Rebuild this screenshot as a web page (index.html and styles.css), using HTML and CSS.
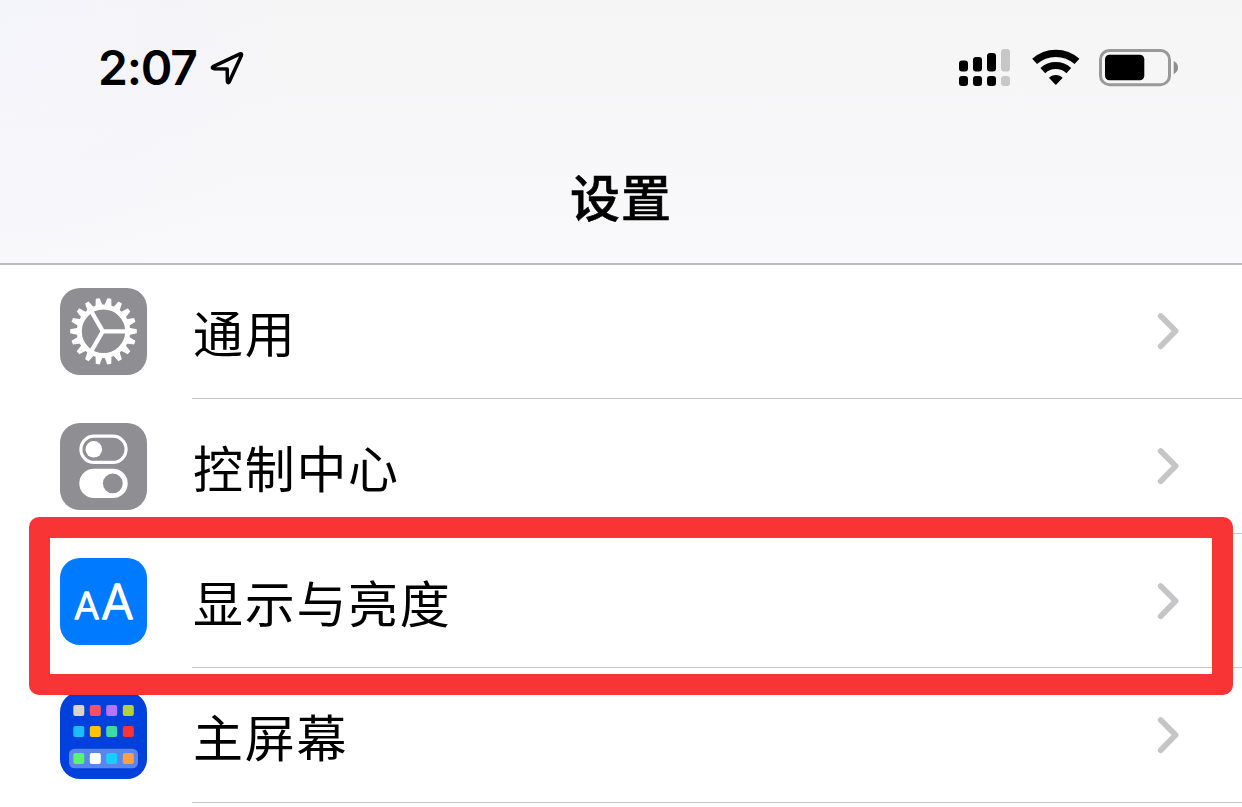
FILE: index.html
```html
<!DOCTYPE html>
<html lang="zh-CN">
<head>
    <meta charset="UTF-8">
    <meta name="viewport" content="width=device-width, initial-scale=1.0">
    <title>设置</title>
    <link rel="stylesheet" href="styles.css">
</head>
<body>
    <header class="header">
        <div class="status-bar">
            <div class="clock">
                <span class="time">2:07</span>
                <svg class="location" width="36" height="36" viewBox="0 0 36 36">
                    <path d="M4 16.6 L31 3.9 Q33.2 3.2 32.4 5.5 L20.3 31.8 Q19 33.8 18.4 31.6 L18.2 19 L4.8 18.7 Q2.2 17.8 4 16.6 Z" fill="none" stroke="#000" stroke-width="3.5" stroke-linejoin="round"/>
                </svg>
            </div>
            <div class="indicators">
                <svg class="signal" width="51" height="38" viewBox="0 0 51 38">
                    <rect x="0" y="11.5" width="9" height="11" rx="3"/>
                    <rect x="14" y="8" width="9" height="14.5" rx="3"/>
                    <rect x="28" y="4" width="9" height="18.5" rx="3"/>
                    <rect x="42" y="0" width="9" height="22.5" rx="3" fill="#c7c7c8"/>
                    <rect x="0" y="27" width="9" height="10" rx="3"/>
                    <rect x="14" y="27" width="9" height="10" rx="3"/>
                    <rect x="28" y="27" width="9" height="10" rx="3"/>
                    <rect x="42" y="27" width="9" height="10" rx="3" fill="#c7c7c8"/>
                </svg>
                <svg class="wifi" width="48" height="38" viewBox="0 0 48 38">
                    <path d="M2.6 12.4 A31.8 31.8 0 0 1 45 12.4" fill="none" stroke="#000" stroke-width="7.2"/>
                    <path d="M10.8 21.6 A19.2 19.2 0 0 1 36.8 21.6" fill="none" stroke="#000" stroke-width="7"/>
                    <path d="M17.9 28.7 A9.5 9.5 0 0 1 29.7 28.7 L23.8 34.9 Z" stroke="#000" stroke-width="1.4" stroke-linejoin="round"/>
                </svg>
                <svg class="battery" width="80" height="38" viewBox="0 0 80 38">
                    <rect x="1.5" y="1.5" width="69" height="34.2" rx="9" fill="none" stroke="#999" stroke-width="3"/>
                    <rect x="6" y="5.8" width="39.3" height="25.4" rx="4.5"/>
                    <path d="M74.7 12 Q79 14.2 79 18.6 Q79 23 74.7 25.2 Z" fill="#8e8e8e"/>
                </svg>
            </div>
        </div>
        <h1 class="title">设置</h1>
    </header>

    <main class="list">
        <div class="row">
            <svg class="icon" width="87" height="87" viewBox="0 0 87 87">
                <defs>
                    <path id="teeth" d="M69 39.7 L76.8 41.3 V45.3 L69 46.9 Z M18 39.7 L10.2 41.3 V45.3 L18 46.9 Z"/>
                </defs>
                <rect width="87" height="87" rx="20" fill="#8e8e93"/>
                <g fill="#fff">
                    <use href="#teeth"/>
                    <use href="#teeth" transform="rotate(20 43.5 43.3)"/>
                    <use href="#teeth" transform="rotate(40 43.5 43.3)"/>
                    <use href="#teeth" transform="rotate(60 43.5 43.3)"/>
                    <use href="#teeth" transform="rotate(80 43.5 43.3)"/>
                    <use href="#teeth" transform="rotate(100 43.5 43.3)"/>
                    <use href="#teeth" transform="rotate(120 43.5 43.3)"/>
                    <use href="#teeth" transform="rotate(140 43.5 43.3)"/>
                    <use href="#teeth" transform="rotate(160 43.5 43.3)"/>
                </g>
                <g fill="none" stroke="#fff">
                    <circle cx="43.5" cy="43.3" r="24.2" stroke-width="5"/>
                    <path d="M67 43.3 H42.8 L31 22.8 M42.8 43.3 L31 63.8" stroke-width="4.3"/>
                </g>
            </svg>
            <div class="cell">
                <span class="label">通用</span>
                <svg class="chevron" width="24" height="38" viewBox="0 0 24 38"><path d="M4.7 4 L19.6 19 L4.7 34.2"/></svg>
            </div>
        </div>

        <div class="row">
            <svg class="icon" width="87" height="87" viewBox="0 0 87 87">
                <rect width="87" height="87" rx="20" fill="#8e8e93"/>
                <rect x="20.9" y="13.2" width="45.2" height="26.2" rx="13.1" fill="none" stroke="#fff" stroke-width="3.2"/>
                <circle cx="33.8" cy="26.3" r="8.3" fill="#fff"/>
                <rect x="19.3" y="45.8" width="48.4" height="29.2" rx="14.6" fill="#fff"/>
                <circle cx="52.8" cy="60.4" r="9.9" fill="#8e8e93"/>
            </svg>
            <div class="cell">
                <span class="label">控制中心</span>
                <svg class="chevron" width="24" height="38" viewBox="0 0 24 38"><path d="M4.7 4 L19.6 19 L4.7 34.2"/></svg>
            </div>
        </div>

        <div class="row">
            <svg class="icon" width="87" height="87" viewBox="0 0 87 87">
                <rect width="87" height="87" rx="20" fill="#007aff"/>
                <g class="letters">
                    <text x="13.9" y="61" font-size="37" textLength="25.4" lengthAdjust="spacingAndGlyphs">A</text>
                    <text x="41.2" y="61" font-size="47.5" textLength="32.4" lengthAdjust="spacingAndGlyphs">A</text>
                </g>
            </svg>
            <div class="cell">
                <span class="label">显示与亮度</span>
                <svg class="chevron" width="24" height="38" viewBox="0 0 24 38"><path d="M4.7 4 L19.6 19 L4.7 34.2"/></svg>
            </div>
        </div>

        <div class="row">
            <svg class="icon" width="87" height="87" viewBox="0 0 87 87">
                <rect width="87" height="87" rx="20" fill="#0040dd"/>
                <rect x="9" y="56.7" width="69" height="19.6" rx="5.5" fill="#5a85ea"/>
                <rect x="13.3" y="13" width="11" height="11" rx="2" fill="#d8d4cb"/>
                <rect x="29.8" y="13" width="11" height="11" rx="2" fill="#ff4f64"/>
                <rect x="46.2" y="13" width="11" height="11" rx="2" fill="#b774ff"/>
                <rect x="62.8" y="13" width="11" height="11" rx="2" fill="#b3d334"/>
                <rect x="13.3" y="34" width="11" height="11" rx="2" fill="#1cbdff"/>
                <rect x="29.8" y="34" width="11" height="11" rx="2" fill="#ffc300"/>
                <rect x="46.2" y="34" width="11" height="11" rx="2" fill="#3edaa5"/>
                <rect x="62.8" y="34" width="11" height="11" rx="2" fill="#ff3430"/>
                <rect x="13.3" y="61" width="11" height="11" rx="2" fill="#58f472"/>
                <rect x="29.8" y="61" width="11" height="11" rx="2" fill="#fff"/>
                <rect x="46.2" y="61" width="11" height="11" rx="2" fill="#16cfff"/>
                <rect x="62.8" y="61" width="11" height="11" rx="2" fill="#ff9f43"/>
            </svg>
            <div class="cell">
                <span class="label">主屏幕</span>
                <svg class="chevron" width="24" height="38" viewBox="0 0 24 38"><path d="M4.7 4 L19.6 19 L4.7 34.2"/></svg>
            </div>
        </div>
    </main>

    <div class="highlight"></div>
</body>
</html>
```

FILE: styles.css
```css
/* Basic Styles */
* {
    box-sizing: border-box;
}

body {
    margin: 0;
    height: 807px;
    position: relative;
    overflow: hidden;
    background-color: #fff;
    color: #000;
    font-family: Inter, "Noto Sans CJK SC", sans-serif;
}

svg {
    display: block;
    flex-shrink: 0;
}

/* Header */
.header {
    height: 265px;
    padding-top: 38px;
    border-bottom: 2px solid #bdbdc0;
    background: radial-gradient(circle at 0 0, rgba(243, 243, 255, 0.6), rgba(243, 243, 255, 0) 300px), linear-gradient(#f5f5f6, #f9f9fb);
}

.status-bar {
    display: flex;
    justify-content: space-between;
    height: 60px;
    padding: 0 63px 0 98px;
}

.clock {
    display: flex;
    align-items: center;
}

.time {
    font-size: 48px;
    font-weight: 600;
    line-height: 60px;
    letter-spacing: -1.2px;
}

.location {
    margin: 0 0 1px 12px;
}

.indicators {
    display: flex;
    padding-top: 11px;
}

.wifi {
    margin: 0 19px 0 22px;
}

.title {
    margin: 62px 0 0;
    font-family: "Noto Sans CJK SC", sans-serif;
    font-size: 50px;
    font-weight: 500;
    line-height: 70px;
    letter-spacing: 1px;
    text-align: center;
    -webkit-text-stroke: 0.6px #000;
}

/* Settings list */
.list {
    margin-top: -0.6px;
}

.row {
    display: flex;
    height: 134.67px;
    padding-left: 60px;
}

.icon {
    margin: 24px 45px 0 0;
}

.cell {
    flex: 1;
    display: flex;
    justify-content: space-between;
    align-items: center;
    padding-right: 62px;
    border-bottom: 1px solid #c6c6c8;
}

.label {
    padding-left: 1px;
    font-family: "Noto Sans CJK SC", sans-serif;
    font-size: 50px;
    line-height: 72px;
    letter-spacing: 1.7px;
}

.chevron path {
    fill: none;
    stroke: #c5c5c7;
    stroke-width: 5.8;
    stroke-linecap: round;
    stroke-linejoin: round;
}

.letters {
    fill: #fff;
    stroke: #fff;
    stroke-width: 1.4;
    stroke-linejoin: round;
    font-family: Inter, sans-serif;
    font-weight: 300;
}

/* Red frame around the display row */
.highlight {
    position: absolute;
    left: 28.5px;
    top: 517px;
    width: 1204px;
    height: 178px;
    border: 21px solid #f93434;
    border-radius: 10px;
}
```
